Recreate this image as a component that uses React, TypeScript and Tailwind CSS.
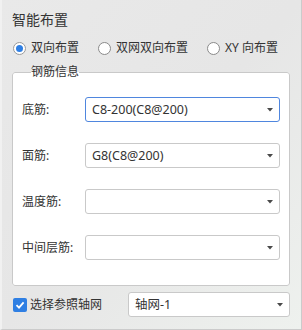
import React from "react";

const font = { fontFamily: '"Noto Sans", "Noto Sans CJK SC", sans-serif' };

function Caret() {
  return (
    <svg width="6" height="4" viewBox="0 0 6 4" className="shrink-0">
      <path d="M0 0 H6 L3 3.5 Z" fill="#4a4a4a" />
    </svg>
  );
}

function Select({ value, focused, className }: { value?: string; focused?: boolean; className: string }) {
  return (
    <div
      className={
        "h-[25px] flex items-center justify-between bg-white rounded-[3px] border pl-[6px] pr-[6px] " +
        (focused ? "border-[#4f86de] " : "border-[#c9c9c9] ") +
        className
      }
    >
      <span className="text-[12.5px] leading-[16px] text-[#333333]">{value}</span>
      <Caret />
    </div>
  );
}

function Radio({ checked, label }: { checked?: boolean; label: string }) {
  return (
    <div className="flex items-center gap-[5px]">
      <div
        className={
          "w-[13px] h-[13px] rounded-full bg-white border flex items-center justify-center " +
          (checked ? "border-[#9a9a9a]" : "border-[#8a8a8a]")
        }
      >
        {checked && <div className="w-[7px] h-[7px] rounded-full bg-[#2f7fe3]" />}
      </div>
      <span className="text-[12px] leading-[20px] text-[#333333]">{label}</span>
    </div>
  );
}

function Row({ label, value, focused }: { label: string; value?: string; focused?: boolean }) {
  return (
    <div className="flex items-center h-[25px]">
      <span className="w-[63px] text-[12px] leading-[16px] text-[#333333]">{label}</span>
      <Select value={value} focused={focused} className="w-[195px]" />
    </div>
  );
}

export default function App() {
  return (
    <div
      style={font}
      className="w-[302px] h-[330px] bg-linear-to-br from-[#e9e9e9] via-[#e6e6e6] to-[#eef1ee] border-l-[2px] border-l-[#f1f1f1] border-r border-r-[#cbcbcb] border-b border-b-[#cbcbcb] box-border flex flex-col"
    >
      <div className="pl-[10px] pt-[10px] text-[14px] leading-[20px] text-[#333333]">智能布置</div>
      <div className="mt-[8px] ml-[11px] flex items-center gap-[19px]">
        <Radio checked label="双向布置" />
        <Radio label="双网双向布置" />
        <Radio label="XY 向布置" />
      </div>
      <fieldset className="mt-[6px] ml-[10px] w-[278px] border border-[#c9c9c9] rounded-[3px] bg-white pl-[9px] pr-[9px] pt-[17px] pb-[25px] flex flex-col gap-[21px]">
        <legend className="ml-[9px] text-[12px] leading-[16px] text-[#333333]">钢筋信息</legend>
        <Row label="底筋:" value="C8-200(C8@200)" focused />
        <Row label="面筋:" value="G8(C8@200)" />
        <Row label="温度筋:" />
        <Row label="中间层筋:" />
      </fieldset>
      <div className="mt-[6px] ml-[11px] flex items-center">
        <div className="w-[14px] h-[14px] rounded-[2px] bg-[#2f7fe3] flex items-center justify-center">
          <svg width="10" height="10" viewBox="0 0 10 10">
            <path d="M1.5 5.2 L4 7.6 L8.6 2.4" fill="none" stroke="white" strokeWidth="1.8" />
          </svg>
        </div>
        <span className="ml-[3px] text-[12px] leading-[20px] text-[#333333]">选择参照轴网</span>
        <Select value="轴网-1" className="ml-[26px] w-[162px] pl-[5px]" />
      </div>
    </div>
  );
}
